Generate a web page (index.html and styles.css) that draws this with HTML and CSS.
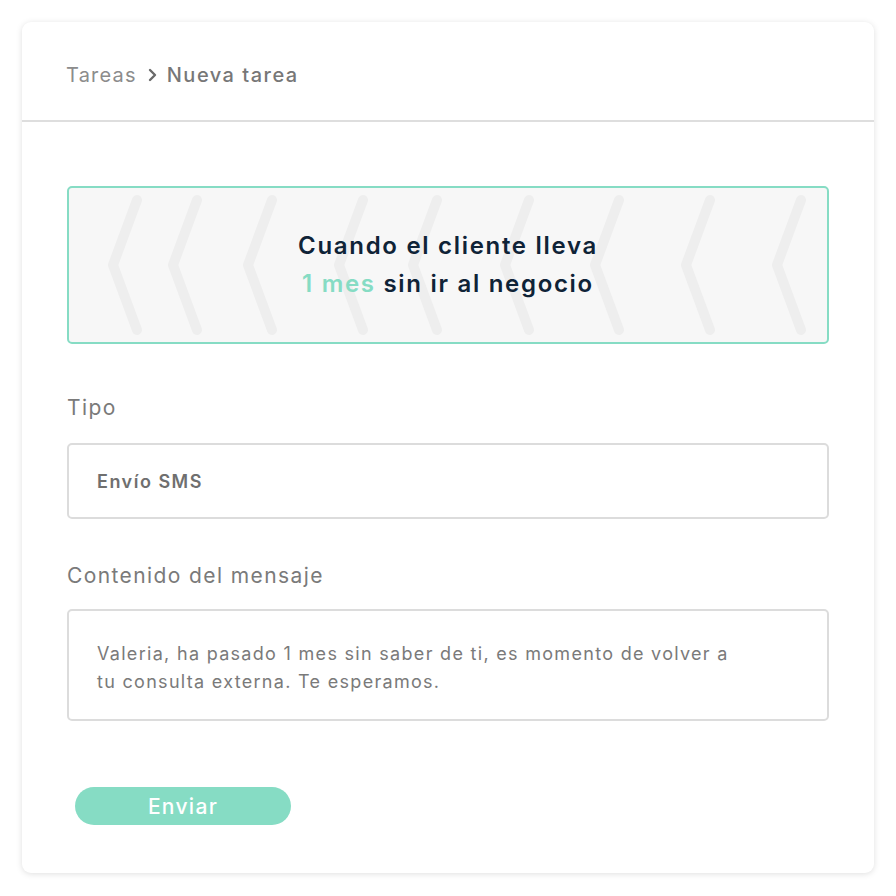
FILE: index.html
```html
<!DOCTYPE html>
<html lang="es">
<head>
  <meta charset="UTF-8">
  <title>Nueva tarea</title>
  <link rel="stylesheet" href="styles.css">
</head>
<body>
  <div class="card">
    <div class="card-header">
      <span class="crumb">Tareas</span>
      <svg class="crumb-sep" width="12" height="14" viewBox="0 0 12 14">
        <polyline points="3,2 8,7 3,12" fill="none" stroke="#6a6a6a" stroke-width="2.4" stroke-linecap="round" stroke-linejoin="round"/>
      </svg>
      <span class="crumb current">Nueva tarea</span>
    </div>

    <div class="card-body">
      <div class="trigger">
        <svg class="trigger-bg" width="762" height="158" viewBox="0 0 762 158">
          <g fill="none" stroke="#eeeeee" stroke-width="10" stroke-linecap="round" stroke-linejoin="round">
            <polyline points="70,14 46,79 70,144"/>
            <polyline points="130,14 106,79 130,144"/>
            <polyline points="205,14 181,79 205,144"/>
            <polyline points="296,14 272,79 296,144"/>
            <polyline points="370,14 346,79 370,144"/>
            <polyline points="462,14 438,79 462,144"/>
            <polyline points="552,14 528,79 552,144"/>
            <polyline points="643,14 619,79 643,144"/>
            <polyline points="734,14 710,79 734,144"/>
          </g>
        </svg>
        <p class="trigger-text">Cuando el cliente lleva<br><span class="accent">1 mes</span> sin ir al negocio</p>
      </div>

      <label class="field-label">Tipo</label>
      <div class="field select">Envío SMS</div>

      <label class="field-label msg-label">Contenido del mensaje</label>
      <div class="field textarea">Valeria, ha pasado 1 mes sin saber de ti, es momento de volver a<br>tu consulta externa. Te esperamos.</div>

      <button class="btn-send">Enviar</button>
    </div>
  </div>
</body>
</html>
```

FILE: styles.css
```css
body {
  font-family: Inter, 'Open Sans', sans-serif;
  margin: 0;
  padding: 22px;
  background: #fff;
}

.card {
  width: 852px;
  height: 851px;
  box-sizing: border-box;
  background: #fff;
  border-radius: 9px;
  box-shadow: 0 1px 6px rgba(0, 0, 0, 0.13);
}

.card-header {
  height: 100px;
  box-sizing: border-box;
  display: flex;
  align-items: center;
  padding: 8px 44px 0;
  border-bottom: 2px solid #dedede;
}

.crumb {
  font-size: 20px;
  letter-spacing: 1.2px;
  color: #8c8c8c;
}

.crumb.current {
  color: #777;
  font-weight: 500;
  letter-spacing: 1.5px;
}

.crumb-sep {
  margin: 0 8px 0 10px;
}

.card-body {
  padding: 64px 45px 0;
}

.trigger {
  position: relative;
  height: 158px;
  box-sizing: border-box;
  border: 2px solid #86dcc4;
  border-radius: 5px;
  background: #f7f7f7;
  display: flex;
  align-items: center;
  justify-content: center;
  overflow: hidden;
}

.trigger-bg {
  position: absolute;
  left: -2px;
  top: -2px;
}

.trigger-text {
  position: relative;
  margin: 0;
  text-align: center;
  font-size: 24px;
  line-height: 38px;
  letter-spacing: 1.7px;
  font-weight: 600;
  color: #0f2337;
}

.accent {
  color: #86dcc4;
}

.field-label {
  display: block;
  font-size: 21px;
  line-height: 24px;
  letter-spacing: 1.4px;
  color: #7a7a7a;
  margin-top: 52px;
}

.field-label + .field {
  margin-top: 23px;
}

.msg-label {
  margin-top: 45px;
}

.msg-label + .field {
  margin-top: 21px;
}

.field {
  box-sizing: border-box;
  border: 2px solid #dcdcdc;
  border-radius: 5px;
  padding: 0 28px;
  color: #6f6f6f;
}

.select {
  height: 76px;
  display: flex;
  align-items: center;
  font-size: 18px;
  font-weight: 600;
  letter-spacing: 1.5px;
}

.textarea {
  height: 112px;
  padding-top: 29px;
  font-size: 18px;
  line-height: 28px;
  letter-spacing: 1.3px;
  color: #7a7a7a;
}

.btn-send {
  display: block;
  margin: 66px 0 0 8px;
  width: 216px;
  height: 38px;
  border: none;
  border-radius: 19px;
  background: #86dcc4;
  color: #fff;
  font-family: inherit;
  font-size: 21px;
  font-weight: 500;
  letter-spacing: 1.3px;
}
```
